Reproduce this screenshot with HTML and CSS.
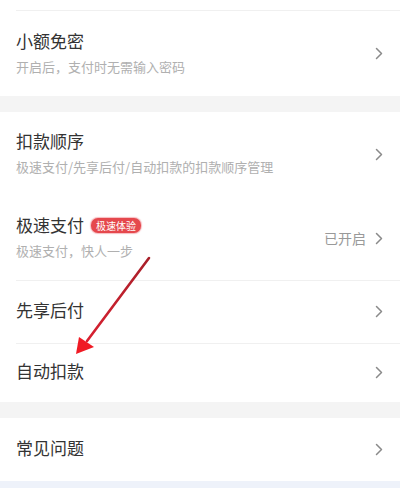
FILE: index.html
```html
<!DOCTYPE html>
<html lang="zh-CN">
<head>
<meta charset="utf-8">
<title>支付设置</title>
<link rel="stylesheet" href="styles.css">
</head>
<body>
<div class="page">
  <div class="top-cap"></div>
  <section class="group">
    <div class="row row-tall row-first">
      <div class="text">
        <div class="title">小额免密</div>
        <div class="sub">开启后，支付时无需输入密码</div>
      </div>
      <svg class="chev" viewBox="0 0 8 13"><path d="M1.5 1.5 L6.5 6.5 L1.5 11.5" /></svg>
    </div>
  </section>
  <div class="gap"></div>
  <section class="group">
    <div class="row row-tall">
      <div class="text">
        <div class="title">扣款顺序</div>
        <div class="sub">极速支付/先享后付/自动扣款的扣款顺序管理</div>
      </div>
      <svg class="chev" viewBox="0 0 8 13"><path d="M1.5 1.5 L6.5 6.5 L1.5 11.5" /></svg>
    </div>
    <div class="row row-tall">
      <div class="text">
        <div class="title">极速支付<span class="badge">极速体验</span></div>
        <div class="sub">极速支付，快人一步</div>
      </div>
      <span class="status">已开启</span>
      <svg class="chev" viewBox="0 0 8 13"><path d="M1.5 1.5 L6.5 6.5 L1.5 11.5" /></svg>
    </div>
    <div class="row row-short divided">
      <div class="text"><div class="title">先享后付</div></div>
      <svg class="chev" viewBox="0 0 8 13"><path d="M1.5 1.5 L6.5 6.5 L1.5 11.5" /></svg>
    </div>
    <div class="row row-short2 divided">
      <div class="text"><div class="title">自动扣款</div></div>
      <svg class="chev" viewBox="0 0 8 13"><path d="M1.5 1.5 L6.5 6.5 L1.5 11.5" /></svg>
    </div>
  </section>
  <div class="gap"></div>
  <section class="group">
    <div class="row row-short">
      <div class="text"><div class="title">常见问题</div></div>
      <svg class="chev" viewBox="0 0 8 13"><path d="M1.5 1.5 L6.5 6.5 L1.5 11.5" /></svg>
    </div>
  </section>
  <div class="bottom"></div>

  <svg class="arrow" viewBox="0 0 400 488" width="400" height="488">
    <defs>
      <linearGradient id="ag" x1="149" y1="258" x2="88" y2="340" gradientUnits="userSpaceOnUse">
        <stop offset="0" stop-color="#a8202a"/>
        <stop offset="1" stop-color="#d82030"/>
      </linearGradient>
    </defs>
    <line x1="149" y1="258" x2="87" y2="341" stroke="url(#ag)" stroke-width="2.6" stroke-linecap="round"/>
    <polygon points="76,354 79,337 94,347" fill="#f01a24"/>
  </svg>
</div>
</body>
</html>
```

FILE: styles.css
```css
html, body {
  margin: 0;
  padding: 0;
  background: #ffffff;
}

body {
  font-family: "Noto Sans CJK SC", "Noto Sans", sans-serif;
  color: #333333;
}

.page {
  position: relative;
  width: 400px;
  height: 488px;
  overflow: hidden;
  background: #ffffff;
}

.top-cap {
  height: 10px;
  background: #ffffff;
}

.group {
  background: #ffffff;
}

.row {
  display: flex;
  align-items: center;
  padding: 0 17px 0 16px;
  box-sizing: border-box;
  position: relative;
}

.row-first {
  border-top: 1px solid #f0f0f0;
  margin-left: 16px;
  padding-left: 0;
}

.row-tall {
  height: 84px;
}

.row-first.row-tall {
  height: 86px;
}

.row-short {
  height: 63px;
}

.row-short2 {
  height: 59px;
}

.text {
  flex: 1;
  display: flex;
  flex-direction: column;
  gap: 5px;
  margin-bottom: 3px;
}

.divided::before {
  content: "";
  position: absolute;
  top: 0;
  left: 16px;
  right: 0;
  border-top: 1px solid #f0f0f0;
}

.title {
  font-size: 17px;
  line-height: 24px;
  color: #333333;
  display: flex;
  align-items: center;
}

.sub {
  font-size: 13px;
  line-height: 18px;
  color: #b0b0b0;
}

.badge {
  display: inline-block;
  margin-left: 7px;
  height: 15px;
  line-height: 15px;
  padding: 0 5px;
  border-radius: 7px;
  background: #e5484d;
  color: #ffffff;
  font-size: 10px;
  box-shadow: 0 0 1px 1px rgba(240, 120, 130, 0.5);
}

.status {
  font-size: 14px;
  color: #999999;
  margin-right: 9px;
}

.chev {
  width: 8px;
  height: 13px;
  flex: none;
}

.chev path {
  fill: none;
  stroke: #8a8a8a;
  stroke-width: 1.5;
  stroke-linecap: round;
  stroke-linejoin: round;
}

.gap {
  height: 16px;
  background: #f4f4f4;
}

.bottom {
  height: 8px;
  background: #eef2fa;
}

.arrow {
  position: absolute;
  top: 0;
  left: 0;
  pointer-events: none;
}
```
